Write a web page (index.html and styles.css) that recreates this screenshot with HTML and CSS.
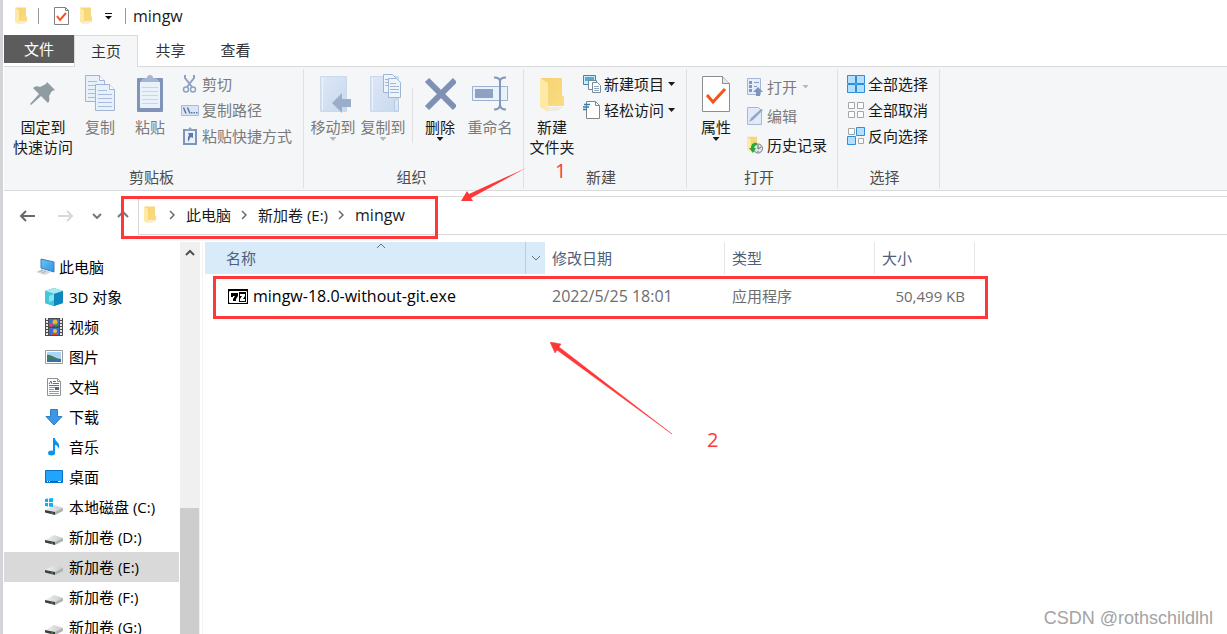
FILE: index.html
```html
<!DOCTYPE html>
<html lang="zh">

<head>
    <meta charset="UTF-8">
    <title>mingw</title>
    <link rel="stylesheet" href="styles.css">
</head>

<body>
    <!-- 公用图标 -->
    <svg class="sprite" width="0" height="0" aria-hidden="true">
        <defs>
            <linearGradient id="gFolder" x1="0" y1="0" x2="1" y2="1">
                <stop offset="0" stop-color="#f5d273"/>
                <stop offset="1" stop-color="#fbdc82"/>
            </linearGradient>
            <linearGradient id="gPaper" x1="0" y1="0" x2="1" y2="1">
                <stop offset="0" stop-color="#dde8f7"/>
                <stop offset="1" stop-color="#c9d8ee"/>
            </linearGradient>
            <linearGradient id="gDrive" x1="0" y1="0" x2="1" y2="0">
                <stop offset="0" stop-color="#f2f2f4"/>
                <stop offset="1" stop-color="#c9c9cc"/>
            </linearGradient>
            <linearGradient id="gBlue" x1="0" y1="0" x2="1" y2="1">
                <stop offset="0" stop-color="#6cc4fa"/>
                <stop offset="1" stop-color="#2f93e0"/>
            </linearGradient>
        </defs>
        <symbol id="folder" viewBox="0 0 24 36">
            <path d="M1 1h21v17l2 2v9H8z" fill="url(#gFolder)"/>
            <path d="M0 1l8 5v29l-8-5z" fill="#ffe9a6"/>
            <path d="M8 30h15l-6 4H8z" fill="#eadfc2" opacity=".5"/>
        </symbol>
        <symbol id="checkdoc" viewBox="0 0 28 36">
            <path d="M.5.5h20l7 7v28H.5z" fill="#fff" stroke="#8d8d8d"/>
            <path d="M20.500.5v7h7" fill="#e8e8e8" stroke="#8d8d8d"/>
            <path d="M5 19l6 7L23 13" fill="none" stroke="#f2541b" stroke-width="3"/>
        </symbol>
        <symbol id="page" viewBox="0 0 20 27">
            <path d="M.5.5h14l5 5v21H.5z" fill="#e8f0fa" stroke="#a0b4d3"/>
            <path d="M14.500.5v5h5" fill="#fff" stroke="#a0b4d3"/>
            <path d="M3 6.500h9M3 10.500h14M3 14.500h14M3 18.500h14M3 22.500h14" stroke="#a9bddb"/>
        </symbol>
        <symbol id="drive" viewBox="0 0 18 10">
            <path d="M0 5L9 0l9 3-8 5z" fill="url(#gDrive)"/>
            <path d="M0 5l10 2v3L0 7.500z" fill="#3b3f3e"/>
            <path d="M10 7l8-4v3l-8 4z" fill="#aeb0b1"/>
            <path d="M6 7.500h2v1H6z" fill="#3fae49"/>
        </symbol>
        <symbol id="chev" viewBox="0 0 6 10">
            <path d="M1 1l4 4-4 4" fill="none" stroke="#6a6a6a" stroke-width="1.500"/>
        </symbol>
    </svg>

    <div class="window">
        <header class="title-bar">
            <svg class="title-folder" width="12" height="18"><use href="#folder"/></svg>
            <span class="title-line"></span>
            <button class="title-btn" aria-label="属性">
                <svg width="15" height="18">
                    <path d="M.5.5h11l3 3v14H.5z" fill="#fff" stroke="#808080"/>
                    <path d="M11.500.5v3h3" fill="none" stroke="#808080"/>
                    <path d="M3 9l3 4 6-7" fill="none" stroke="#f2541b" stroke-width="2"/>
                </svg>
            </button>
            <button class="title-btn" aria-label="新建文件夹"><svg width="12" height="18"><use href="#folder"/></svg></button>
            <button class="title-btn" aria-label="自定义快速访问工具栏">
                <svg width="7" height="7"><path d="M0 .5h7" stroke="#111"/><path d="M0 3h7L3.500 6.500z" fill="#111"/></svg>
            </button>
            <span class="title-line"></span>
            <span class="title-text">mingw</span>
        </header>

        <nav class="tabs">
            <button class="tab tab-file">文件</button>
            <button class="tab tab-active">主页</button>
            <button class="tab">共享</button>
            <button class="tab">查看</button>
        </nav>

        <div class="ribbon">
            <section class="group group-clipboard">
                <div class="group-main">
                    <button class="big big-wide">
                        <svg class="big-icon" width="36" height="42">
                            <path d="M22 8l8 8-3 1-3 5c1 4 0 6-1 7l-7-7-10 9-1-1 9-10-6-6c2-2 5-2 7-1l6-3z" fill="#8f9da3"/>
                        </svg>
                        <span>固定到<br>快速访问</span>
                    </button>
                    <button class="big off">
                        <svg class="big-icon" width="32" height="42">
                            <svg x="1" y="1" width="20" height="27"><use href="#page"/></svg>
                            <svg x="11" y="10" width="20" height="27"><use href="#page"/></svg>
                        </svg>
                        <span>复制</span>
                    </button>
                    <button class="big off">
                        <svg class="big-icon" width="28" height="42">
                            <rect x="1" y="4" width="26" height="34" rx="1" fill="#8094ba"/>
                            <rect x="4" y="8" width="20" height="26" fill="#e9f1fb"/>
                            <path d="M6 13.500h16M6 17.500h16M6 21.500h16M6 25.500h16M6 29.500h16" stroke="#c7d5ea"/>
                            <path d="M5 8c0-3 3-4 6-4a3 3 0 0 1 6 0c3 0 6 1 6 4z" fill="#a6b5d1"/>
                        </svg>
                        <span>粘贴</span>
                    </button>
                    <div class="smalls">
                        <button class="small off">
                            <svg width="18" height="18" fill="none" stroke="#8fa2c3" stroke-width="1.500">
                                <path d="M4 0v3l7 9M13 0v3L6 12" stroke-width="2"/>
                                <circle cx="5" cy="14.500" r="2.500"/><circle cx="12" cy="14.500" r="2.500"/>
                            </svg>
                            剪切
                        </button>
                        <button class="small off">
                            <svg width="18" height="18">
                                <path d="M.5 4.500h17v10H.5z" fill="#d9e6f7" stroke="#a8bbd9"/>
                                <path d="M2.500 6.500l2.500 6M6.500 6.500l2.500 6" stroke="#62779d" stroke-width="1.500"/>
                                <path d="M10 11h1.500v1.500H10zM12.500 11H14v1.500h-1.500zM15 11h1.500v1.500H15z" fill="#62779d"/>
                            </svg>
                            复制路径
                        </button>
                        <button class="small off">
                            <svg width="18" height="18">
                                <path d="M2 2h14v16H2z" fill="#8094ba"/>
                                <path d="M4 4h10v12H4z" fill="#e9f1fb"/>
                                <path d="M5 4V2h2l2-2 2 2h2v2z" fill="#8fa2c3"/>
                                <path d="M7 6h5v5l-2-1c-1 1-2 2-2 5-2-3-1-5 0-7z" fill="#5d77a8"/>
                            </svg>
                            粘贴快捷方式
                        </button>
                    </div>
                </div>
                <div class="group-name">剪贴板</div>
            </section>

            <section class="group group-organize">
                <div class="group-main">
                    <button class="big off">
                        <svg class="big-icon" width="36" height="42">
                            <path d="M5.500 2.500h26v35h-26z" fill="url(#gPaper)" stroke="#cbd9ed"/>
                            <path d="M7.500 4v32" stroke="#edf3fb"/>
                            <path d="M17 29l10-10v6h9v8h-9v6z" fill="#9aadcb"/>
                        </svg>
                        <span>移动到</span>
                        <i class="caret"></i>
                    </button>
                    <button class="big off">
                        <svg class="big-icon" width="36" height="42">
                            <path d="M5.500 2.500h28v35h-28z" fill="url(#gPaper)" stroke="#cbd9ed"/>
                            <path d="M7.500 4v32" stroke="#edf3fb"/>
                            <path d="M29.500 37V27c0-3 4-3 4 0v10z" fill="#dce7f6" stroke="#b9cae4"/>
                            <path d="M18.500.5h9l4 4v14h-13z" fill="#eef4fc" stroke="#a0b4d3"/>
                            <path d="M23.500 4.500h8l4 4v15h-12z" fill="#eef4fc" stroke="#a0b4d3"/>
                            <path d="M20 5.500h3M20 8.500h3M20 11.500h3M25 9.500h6M25 12.500h9M25 15.500h9M25 18.500h9" stroke="#a0b4d3"/>
                        </svg>
                        <span>复制到</span>
                        <i class="caret"></i>
                    </button>
                    <span class="split"></span>
                    <button class="big">
                        <svg class="big-icon" width="32" height="42">
                            <path d="M3 6l28 28M31 6L3 34" stroke="#7e90b4" stroke-width="6"/>
                        </svg>
                        <span>删除</span>
                        <i class="caret"></i>
                    </button>
                    <button class="big off">
                        <svg class="big-icon" width="36" height="42">
                            <path d="M.5 12.500h35v14H.5z" fill="#e9f1fb" stroke="#9db0cf"/>
                            <path d="M3 15h18v9H3z" fill="#8ea1c3"/>
                            <path d="M22 3.500c4 0 6 1 6 4v23c0 3-2 5-6 5M34 3.500c-4 0-6 1-6 4v23c0 3 2 5 6 5" fill="none" stroke="#8397bb" stroke-width="2"/>
                        </svg>
                        <span>重命名</span>
                    </button>
                </div>
                <div class="group-name">组织</div>
            </section>

            <section class="group group-new">
                <div class="group-main">
                    <button class="big">
                        <svg class="big-icon" width="24" height="42"><svg y="3" width="24" height="36"><use href="#folder"/></svg></svg>
                        <span>新建<br>文件夹</span>
                    </button>
                    <div class="smalls">
                        <button class="small">
                            <svg width="18" height="18">
                                <path d="M.5.500h12v9H.5z" fill="#c8edfb" stroke="#3d87a9"/>
                                <path d="M2 2h9v4H2z" fill="#5aa9cf"/>
                                <path d="M5.500 5.500h8v9h-8z" fill="#fff" stroke="#6d8ea0"/>
                                <path d="M9.500 7.500h5l3 3v7h-8z" fill="#fff" stroke="#7f8a94"/>
                                <path d="M11 11.500h5M11 13.500h5M11 15.500h5" stroke="#8ea9c9"/>
                            </svg>
                            新建项目
                            <i class="caret"></i>
                        </button>
                        <button class="small">
                            <svg width="18" height="18">
                                <path d="M3.500.500h9l4 4v13h-13z" fill="#fff" stroke="#858585"/>
                                <path d="M12.500.500v4h4" fill="none" stroke="#858585"/>
                                <path d="M1 3.500h6M0 6h6M0 8.500h4" stroke="#2d7cb6" stroke-width="1.500"/>
                            </svg>
                            轻松访问
                            <i class="caret"></i>
                        </button>
                    </div>
                </div>
                <div class="group-name">新建</div>
            </section>

            <section class="group group-open">
                <div class="group-main">
                    <button class="big">
                        <svg class="big-icon" width="28" height="42"><svg y="2" width="28" height="36"><use href="#checkdoc"/></svg></svg>
                        <span>属性</span>
                        <i class="caret"></i>
                    </button>
                    <div class="smalls smalls-loose">
                        <button class="small off">
                            <svg width="16" height="18">
                                <path d="M.5.500h13v16H.5z" fill="#e4edf9" stroke="#a5b7d4"/>
                                <path d="M2 3h3v3H2zM2 7h3v3H2zM2 11h3v3H2z" fill="#8297bd"/>
                                <path d="M7 4.500h5M7 8.500h3" stroke="#8297bd"/>
                                <path d="M11 9l5 5h-3v4H9v-4H6z" fill="#7e93ba"/>
                            </svg>
                            打开
                            <i class="caret"></i>
                        </button>
                        <button class="small off">
                            <svg width="16" height="18">
                                <path d="M.5.500h11l3 3v14H.5z" fill="#e0eaf8" stroke="#a5b7d4"/>
                                <path d="M2 15l2-4L14 2l2 1L6 13z" fill="#91a6c8"/>
                            </svg>
                            编辑
                        </button>
                        <button class="small">
                            <svg width="16" height="18">
                                <svg width="11" height="17"><use href="#folder"/></svg>
                                <circle cx="11" cy="12.500" r="4.500" fill="#e3e6e8" stroke="#717b80"/>
                                <path d="M11 9v4l3-2M11 16v-1" stroke="#60686c" fill="none"/>
                                <path d="M10 7c-4-1-6 2-6 5H2l4 5 3-5H7c0-2 1-3 3-3z" fill="#22ab36"/>
                            </svg>
                            历史记录
                        </button>
                    </div>
                </div>
                <div class="group-name">打开</div>
            </section>

            <section class="group group-select">
                <div class="group-main">
                    <div class="smalls">
                        <button class="small">
                            <svg width="18" height="18" fill="#b5dffa" stroke="#2b8ee0">
                                <path d="M.5.500h8v8h-8zM9.500.500h8v8h-8zM.5 9.500h8v8h-8zM9.500 9.500h8v8h-8z"/>
                            </svg>
                            全部选择
                        </button>
                        <button class="small">
                            <svg width="18" height="18" fill="#fff" stroke="#a6a6a6">
                                <path d="M1.500 1.500h6v6h-6zM10.500 1.500h6v6h-6zM1.500 10.500h6v6h-6zM10.500 10.500h6v6h-6z"/>
                            </svg>
                            全部取消
                        </button>
                        <button class="small">
                            <svg width="18" height="18">
                                <path d="M1.500 1.500h6v6h-6zM11.500 11.500h5v5h-5z" fill="#fff" stroke="#a6a6a6"/>
                                <path d="M9.500.500h8v8h-8zM.5 9.500h8v8h-8z" fill="#b5dffa" stroke="#2b8ee0"/>
                            </svg>
                            反向选择
                        </button>
                    </div>
                </div>
                <div class="group-name">选择</div>
            </section>
        </div>

        <div class="address-bar">
            <div class="nav-btns">
                <button aria-label="后退"><svg width="16" height="12"><path d="M16 6H2M7 1L2 6l5 5" fill="none" stroke="#6a6a6a" stroke-width="2"/></svg></button>
                <button aria-label="前进"><svg width="16" height="12"><path d="M0 6h14M9 1l5 5-5 5" fill="none" stroke="#d8d8d8" stroke-width="2"/></svg></button>
                <button class="nav-recent" aria-label="最近浏览的位置"><svg width="10" height="6"><path d="M1 1l4 4 4-4" fill="none" stroke="#777" stroke-width="2"/></svg></button>
                <button class="nav-up" aria-label="上移"><svg width="12" height="12"><path d="M6 12V2M1 7l5-5 5 5" fill="none" stroke="#777" stroke-width="2"/></svg></button>
            </div>
            <div class="path">
                <svg width="12" height="18"><use href="#folder"/></svg>
                <svg class="path-chev" width="6" height="10"><use href="#chev"/></svg>
                <a href="#">此电脑</a>
                <svg class="path-chev" width="6" height="10"><use href="#chev"/></svg>
                <a href="#">新加卷 (E:)</a>
                <svg class="path-chev" width="6" height="10"><use href="#chev"/></svg>
                <a class="path-last" href="#">mingw</a>
            </div>
        </div>

        <div class="content">
            <nav class="tree">
                <a class="tree-item tree-root" href="#">
                    <svg width="19" height="18">
                        <path d="M5 1l13 3v10L5 10z" fill="url(#gBlue)" stroke="#3a7fb5"/>
                        <path d="M0 14l6-3 9 3-6 3z" fill="#d5d9dc"/>
                        <path d="M3 14l4-2M6 15l4-2" stroke="#a6adb2"/>
                    </svg>
                    此电脑
                </a>
                <a class="tree-item" href="#">
                    <svg width="18" height="18">
                        <path d="M9 0l9 3v12l-9 3-9-3V3z" fill="#16a5c9"/>
                        <path d="M9 0l9 3-9 3-9-3z" fill="#a8e9f2"/>
                        <path d="M0 3l9 3v12l-9-3z" fill="#45c7db"/>
                        <path d="M9 6l9-3v12l-9 3z" fill="#0d87bd"/>
                        <path d="M4 8l5-2v6l-5 2z" fill="#8be3ee"/>
                    </svg>
                    3D 对象
                </a>
                <a class="tree-item" href="#">
                    <svg width="18" height="18">
                        <path d="M0 0h18v18H0z" fill="#4b4b4b"/>
                        <path d="M4 1h10v7H4zM4 10h10v7H4z" fill="#3b71ce"/>
                        <path d="M2 0v18M16 0v18" stroke="#e6e6e6" stroke-width="2" stroke-dasharray="2 1"/>
                        <circle cx="10" cy="4" r="2.500" fill="#e9b62c"/><circle cx="6" cy="7" r="2" fill="#d9417c"/>
                        <circle cx="11" cy="7" r="1.500" fill="#40a03c"/><circle cx="10" cy="13" r="2" fill="#f0c233"/>
                        <path d="M7 16h6" stroke="#da4933" stroke-width="2"/>
                    </svg>
                    视频
                </a>
                <a class="tree-item" href="#">
                    <svg width="18" height="18">
                        <path d="M.5 2.500h17v13H.5z" fill="#fff" stroke="#9b9b9b"/>
                        <path d="M2 4h14v10H2z" fill="#a8d8f6"/>
                        <path d="M2 7c4-1 8 4 14 4v2H2z" fill="#3f7c65"/>
                        <path d="M2 12c5 0 9-1 14 0v2H2z" fill="#386ea8"/>
                    </svg>
                    图片
                </a>
                <a class="tree-item" href="#">
                    <svg width="18" height="18">
                        <path d="M2.500.500h10l3 3v14h-13z" fill="#fff" stroke="#929292"/>
                        <path d="M12.500.500v3h3" fill="none" stroke="#929292"/>
                        <path d="M4 6l2-3 1 3" fill="none" stroke="#2b80c9"/>
                        <path d="M8 3.500h3M8 5.500h6M4 7.500h10" stroke="#2b80c9"/>
                        <path d="M4 9.500h10M4 11.500h5M4 13.500h10M4 15.500h10" stroke="#9a9a9a"/>
                        <path d="M10 9h4v3h-4z" fill="#44698c"/>
                    </svg>
                    文档
                </a>
                <a class="tree-item" href="#">
                    <svg width="18" height="18"><path d="M5.500 1.500h7v7h4.500L9 17 1 8.500h4.500z" fill="#3c97e6" stroke="#2a7ecb"/></svg>
                    下载
                </a>
                <a class="tree-item" href="#">
                    <svg width="18" height="18">
                        <ellipse cx="6.500" cy="15" rx="3.500" ry="2.500" fill="#0a94f0"/>
                        <path d="M8 0h2c0 4 5 4 4 9l-1 2c0-3-1-4-3-4v8H8z" fill="#0a94f0"/>
                    </svg>
                    音乐
                </a>
                <a class="tree-item" href="#">
                    <svg width="18" height="18">
                        <path d="M.5 2.500h17v12H.5z" fill="#1fa5fb" stroke="#0873c4"/>
                        <path d="M1 13.500h16" stroke="#0761a6"/>
                        <path d="M2 13.500h1M4 13.500h1M13 13.500h3" stroke="#fff"/>
                    </svg>
                    桌面
                </a>
                <a class="tree-item" href="#">
                    <svg width="18" height="18">
                        <svg y="7" width="18" height="10"><use href="#drive"/></svg>
                        <path d="M0 1l3-.500V4H0zM4 .500L8 0v4H4zM0 5h3v3.500L0 8zM4 5h4v4l-4-.500z" fill="#08b3ef"/>
                    </svg>
                    本地磁盘 (C:)
                </a>
                <a class="tree-item" href="#"><svg width="18" height="18"><svg y="7" width="18" height="10"><use href="#drive"/></svg></svg>新加卷 (D:)</a>
                <a class="tree-item tree-selected" href="#"><svg width="18" height="18"><svg y="7" width="18" height="10"><use href="#drive"/></svg></svg>新加卷 (E:)</a>
                <a class="tree-item" href="#"><svg width="18" height="18"><svg y="7" width="18" height="10"><use href="#drive"/></svg></svg>新加卷 (F:)</a>
                <a class="tree-item" href="#"><svg width="18" height="18"><svg y="7" width="18" height="10"><use href="#drive"/></svg></svg>新加卷 (G:)</a>
            </nav>
            <div class="scroll">
                <svg width="10" height="7"><path d="M1 6l4-4 4 4" fill="none" stroke="#505050" stroke-width="2"/></svg>
                <span class="scroll-thumb"></span>
            </div>

            <main class="files">
                <table>
                    <colgroup>
                        <col class="col-name">
                        <col class="col-date">
                        <col class="col-type">
                        <col class="col-size">
                    </colgroup>
                    <thead>
                        <tr>
                            <th class="th-name">
                                <div class="th-inner">
                                    <span class="th-text">名称</span>
                                    <svg class="th-sort" width="10" height="6"><path d="M1 5l4-4 4 4" fill="none" stroke="#5f7384"/></svg>
                                    <button class="th-drop" aria-label="筛选"><svg width="10" height="6"><path d="M1 1l4 4 4-4" fill="none" stroke="#5f7384"/></svg></button>
                                </div>
                            </th>
                            <th>修改日期</th>
                            <th>类型</th>
                            <th>大小</th>
                        </tr>
                    </thead>
                    <tbody>
                        <tr>
                            <td>
                                <div class="file-name">
                                    <svg width="20" height="15">
                                        <path d="M0 0h20v15H0z"/>
                                        <path d="M1.500 2.500h17v11h-17z" fill="none" stroke="#fff"/>
                                        <path d="M2 3h9v10H2z" fill="#fff"/>
                                        <path d="M3 4h7v3l-2 3v2H5v-2l2-3H5v1H3z"/>
                                        <path d="M12 5h5v2l-2 3h2v2h-5v-2l2-3h-2z" fill="#fff"/>
                                    </svg>
                                    mingw-18.0-without-git.exe
                                </div>
                            </td>
                            <td class="file-date">2022/5/25 18:01</td>
                            <td>应用程序</td>
                            <td class="file-size">50,499 KB</td>
                        </tr>
                    </tbody>
                </table>
            </main>
        </div>
    </div>

    <!-- 标注 -->
    <div class="mark mark-path"></div>
    <div class="mark mark-file"></div>
    <svg class="arrow arrow-1" width="66" height="36">
        <path d="M66 0L9 26l-2-3-6 10 12 0-2-3z" fill="#fe3838"/>
    </svg>
    <svg class="arrow arrow-2" width="124" height="94">
        <path d="M0 0l11 2-2 3 113 87L7 8l-2 3z" fill="#fe3838" stroke="#fe3838" stroke-width=".5"/>
    </svg>
    <span class="num num-1">1</span>
    <span class="num num-2">2</span>
    <span class="watermark">CSDN @rothschildlhl</span>
</body>

</html>
```
FILE: styles.css
```css
* {
    box-sizing: border-box;
}

html,
body {
    margin: 0;
    height: 100%;
}

body {
    position: relative;
    overflow: hidden;
    background: #fff;
    font: 15px/20px "Open Sans", "Noto Sans CJK SC", sans-serif;
    color: #1a1a1a;
}

button {
    margin: 0;
    padding: 0;
    border: 0;
    background: none;
    font: inherit;
    color: inherit;
}

a {
    color: inherit;
    text-decoration: none;
}

svg {
    display: block;
    flex: none;
}

.sprite {
    position: absolute;
}

.window {
    display: flex;
    flex-direction: column;
    height: 100%;
    padding-left: 1px;
    border-left: 3px solid #d3d4d7;
}

/* 标题栏 */
.title-bar {
    display: flex;
    align-items: center;
    flex: none;
    height: 35px;
    padding: 0 0 3px 11px;
}

.title-line {
    width: 1px;
    height: 16px;
    margin: 0 7px 0 11px;
    background: #999;
}

.title-btn {
    margin-left: 8px;
    margin-right: 3px;
}

.title-btn + .title-btn + .title-btn {
    margin-left: 10px;
    margin-right: 2px;
}

.title-text,
.path-last {
    font-size: 16px;
}

/* 选项卡 */
.tabs {
    display: flex;
    flex: none;
    height: 32px;
    border-bottom: 1px solid #d9dadc;
}

.tab {
    width: 65px;
    height: 31px;
    padding-bottom: 2px;
    color: #333;
}

.tab-file {
    width: 70px;
    height: 28px;
    padding-bottom: 0;
    background: #5c5c5c;
    color: #fff;
}

.tab-active {
    width: 64px;
    height: 32px;
    border: 1px solid #d9dadc;
    border-bottom: 0;
    background: #f4f6f8;
}

/* 功能区 */
.ribbon {
    display: flex;
    flex: none;
    height: 124px;
    background: #f4f6f8;
    border-bottom: 1px solid #d9dadc;
    padding: 2px 0;
}

.group {
    display: flex;
    flex-direction: column;
    border-right: 1px solid #dfe1e4;
}

.group-clipboard {
    padding: 0 11px 0 7px;
}

.group-organize {
    padding: 0 8px 0 4px;
}

.group-new {
    padding: 0 11px 0 3px;
}

.group-open {
    padding: 0 10px 0 4px;
}

.group-select {
    padding: 0 11px 0 3px;
}

.group-main {
    display: flex;
    flex: 1;
    align-items: flex-start;
}

.group-name {
    flex: none;
    height: 21px;
    text-align: center;
    color: #4d4d4d;
}

.big {
    display: flex;
    flex-direction: column;
    align-items: center;
    width: 50px;
    padding-top: 5px;
    white-space: nowrap;
}

.big-wide {
    width: 64px;
}

.big-icon {
    margin-bottom: 1px;
}

.off {
    color: #7a7a7a;
}

.caret {
    width: 7px;
    height: 4px;
    background: #1a1a1a;
    clip-path: polygon(0 0, 100% 0, 50% 100%);
}

.off .caret {
    background: #b5b7ba;
}

.split {
    width: 1px;
    height: 55px;
    margin: 19px 2px 0 4px;
    background: #dfe1e4;
}

.smalls {
    padding: 2px 0 0 6px;
}

.smalls-loose {
    padding-top: 3px;
}

.small {
    display: flex;
    align-items: center;
    gap: 3px;
    height: 26px;
    white-space: nowrap;
}

.small .caret {
    margin-left: 1px;
}

.smalls-loose .small {
    gap: 4px;
    height: 29px;
}

/* 地址栏 */
.address-bar {
    display: flex;
    flex: none;
    height: 51px;
    padding: 5px 0 7px;
}

.nav-btns {
    display: flex;
    align-items: center;
    width: 134px;
    padding-left: 15px;
}

.nav-btns button {
    margin-right: 23px;
}

.nav-btns .nav-recent {
    margin-left: -5px;
    margin-right: 15px;
}

.nav-btns .nav-up {
    margin-right: 0;
}

.path {
    display: flex;
    align-items: center;
    flex: 1;
    padding: 0 0 2px 5px;
    border: 1px solid #d9d9d9;
    border-right: 0;
}

.path-chev {
    margin: 0 11px 0 10px;
}

.path svg:first-child {
    margin-right: 3px;
}

/* 主体 */
.content {
    display: flex;
    flex: 1;
    min-height: 0;
}

.tree {
    width: 176px;
    padding: 10px 1px 0 0;
    overflow: hidden;
    color: #000;
}

.tree-item {
    display: flex;
    align-items: center;
    gap: 6px;
    height: 30px;
    padding-left: 41px;
    white-space: nowrap;
}

.tree-root {
    gap: 4px;
    padding-left: 32px;
}

.tree-selected {
    background: #d9d9d9;
}

.scroll {
    display: flex;
    flex-direction: column;
    align-items: center;
    width: 20px;
    padding: 7px 1px 0 0;
    background: #f0f0f0;
}

.scroll-thumb {
    flex: 1;
    align-self: stretch;
    margin-top: 252px;
    background: #cdcdcd;
}

.files {
    flex: 1;
    margin-left: 2px;
    padding-left: 2px;
    border-left: 1px solid #f3f3f3;
}

table {
    table-layout: fixed;
    width: 770px;
    border-spacing: 0;
}

.col-name {
    width: 340px;
}

.col-date {
    width: 180px;
}

.col-type {
    width: 150px;
}

.col-size {
    width: 100px;
}

th {
    height: 32px;
    padding: 0 0 0 7px;
    border-right: 1px solid #e5e5e5;
    font-weight: normal;
    text-align: left;
    color: #4c607a;
}

.th-name {
    padding: 0;
    border-right: 0;
    background: #d9ebf9;
}

.th-inner {
    display: flex;
    height: 32px;
}

.th-text {
    width: 171px;
    padding-left: 21px;
    line-height: 32px;
}

.th-sort {
    margin-top: 1px;
}

.th-drop {
    display: flex;
    align-items: center;
    justify-content: center;
    width: 20px;
    margin-left: auto;
    border-left: 1px solid #b8cfe0;
}

td {
    height: 44px;
    padding: 0 0 0 7px;
    color: #6d6d6d;
}

.file-name {
    display: flex;
    align-items: center;
    gap: 5px;
    padding-left: 16px;
    font-size: 16px;
    color: #000;
}

.file-date {
    font-size: 16px;
}

.file-size {
    padding-right: 10px;
    text-align: right;
}

/* 标注 */
.mark {
    position: absolute;
    border: 3px solid #fe3838;
}

.mark-path {
    left: 121px;
    top: 196px;
    width: 317px;
    height: 43px;
}

.mark-file {
    left: 213px;
    top: 276px;
    width: 775px;
    height: 43px;
}

.arrow {
    position: absolute;
}

.arrow-1 {
    left: 460px;
    top: 168px;
}

.arrow-2 {
    left: 550px;
    top: 342px;
}

.num {
    position: absolute;
    font-size: 20px;
    color: #fe3838;
}

.num-1 {
    left: 555px;
    top: 161px;
}

.num-2 {
    left: 707px;
    top: 430px;
}

.watermark {
    position: absolute;
    right: 14px;
    bottom: 6px;
    font: 18px/20px "Liberation Sans", sans-serif;
    color: #a3a3a3;
}
```
